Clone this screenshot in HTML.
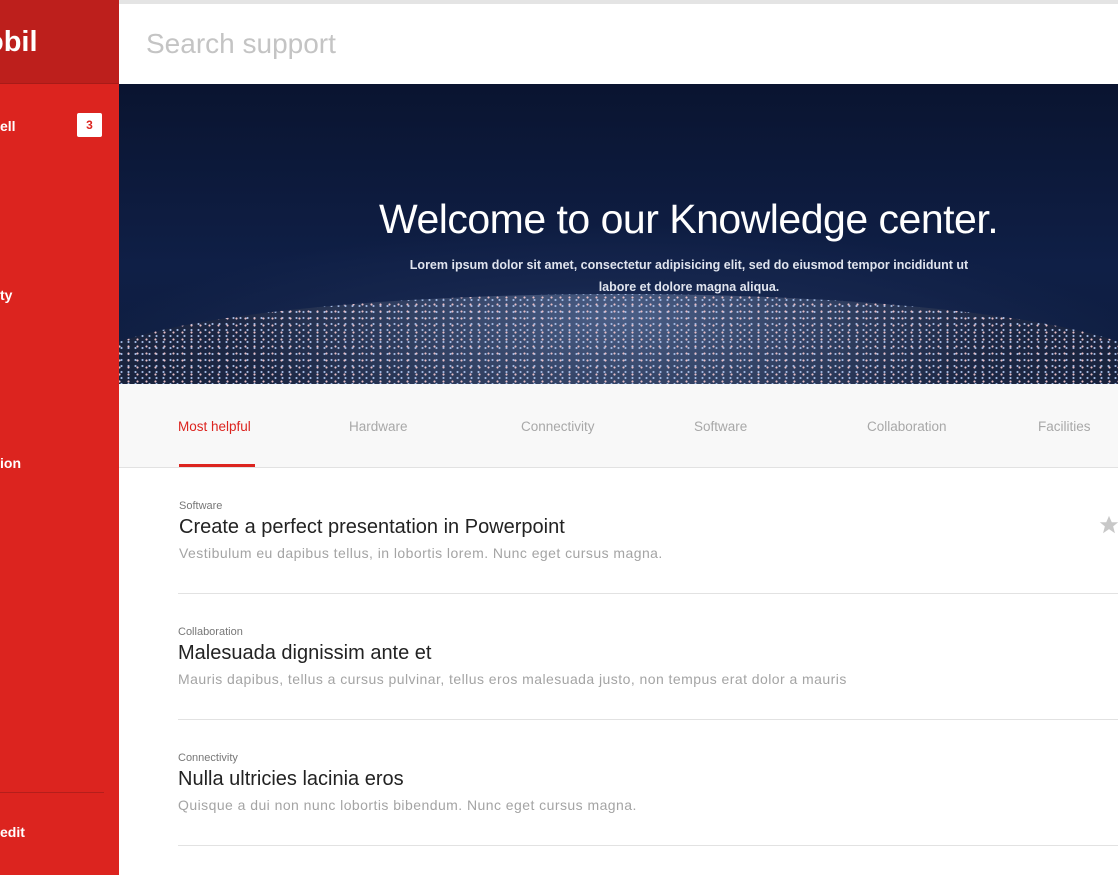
<!DOCTYPE html>
<html><head><meta charset="utf-8"><style>
*{margin:0;padding:0;box-sizing:border-box}
body{width:1118px;height:875px;overflow:hidden;font-family:"Liberation Sans",sans-serif;background:#fff;position:relative}
.side{position:absolute;left:0;top:0;width:119px;height:875px;background:#dc241f;color:#fff}
.side .top{height:84px;background:#bd1f1c;border-bottom:1px solid #a81b18}
.side .logo{position:absolute;left:-14px;top:26px;font-size:29px;font-weight:bold}
.si{position:absolute;left:0;font-size:14px;font-weight:bold}
.badge{position:absolute;left:77px;top:113px;width:25px;height:24px;background:#fff;border-radius:2px;color:#dc241f;font-size:12px;font-weight:bold;text-align:center;line-height:24px}
.hr{position:absolute;left:0;top:792px;width:104px;height:1px;background:#b51e1b}
.topbar{position:absolute;left:119px;top:0;right:0;height:4px;background:#e4e4e4}
.search{position:absolute;left:146px;top:28px;font-size:28px;color:#c4c4c4;font-weight:300}
.hero{position:absolute;left:119px;top:84px;width:999px;height:300px;background:radial-gradient(ellipse 700px 200px at 500px 300px,#2a4272 0%,#16264d 50%,transparent 80%),linear-gradient(#0a1430,#0f1f46 60%,#0e1d3e);overflow:hidden}
.city{position:absolute;left:-40px;top:210px;width:1080px;height:220px;border-radius:50% 50% 0 0/35% 35% 0 0;background:
radial-gradient(circle,#e8c0c8 0.8px,transparent 1.3px) 0 0/9px 7px,
radial-gradient(circle,#9fb6e0 0.8px,transparent 1.3px) 4px 3px/7px 6px,
radial-gradient(ellipse at 50% 10%,#4a5e86,#1d2845 50%,#121a30);}
.hero h1{position:absolute;left:260px;top:112px;font-size:41px;color:#fff;font-weight:300;letter-spacing:-.5px}
.hero p{position:absolute;left:275px;top:170px;width:590px;text-align:center;font-size:12.5px;color:#e0e4ee;font-weight:bold;line-height:22px}
.tabs{position:absolute;left:119px;top:384px;right:0;height:84px;background:#f8f8f8;border-bottom:1px solid #e2e2e2}
.tab{position:absolute;top:35px;font-size:13.5px;color:#a8a8a8}
.tab.on{color:#dc241f}
.ul{position:absolute;left:179px;top:464px;width:76px;height:3px;background:#dc241f}
.item{position:absolute;left:178px;width:940px;height:126px;border-bottom:1px solid #e2e2e2}
.cat{position:absolute;font-size:11px;color:#777}
.tt{position:absolute;font-size:20px;color:#222}
.ds{position:absolute;font-size:14px;color:#a4a4a4;letter-spacing:.45px}
</style></head><body>
<div class="side"><div class="top"></div><div class="logo">obil</div>
<div class="si" style="top:118px">ell</div><div class="badge">3</div>
<div class="si" style="top:287px">ty</div>
<div class="si" style="top:455px">ion</div>
<div class="hr"></div>
<div class="si" style="top:824px">edit</div></div>
<div class="topbar"></div>
<div class="search">Search support</div>
<div class="hero"><div class="city"></div>
<h1>Welcome to our Knowledge center.</h1>
<p>Lorem ipsum dolor sit amet, consectetur adipisicing elit, sed do eiusmod tempor incididunt ut labore et dolore magna aliqua.</p></div>
<div class="tabs">
<div class="tab on" style="left:59px">Most helpful</div>
<div class="tab" style="left:230px">Hardware</div>
<div class="tab" style="left:402px">Connectivity</div>
<div class="tab" style="left:575px">Software</div>
<div class="tab" style="left:748px">Collaboration</div>
<div class="tab" style="left:919px">Facilities</div>
</div>
<div class="ul"></div>
<div class="item" style="top:468px"><div class="cat" style="left:1px;top:32px">Software</div><div class="tt" style="left:1px;top:48px">Create a perfect presentation in Powerpoint</div><div class="ds" style="left:1px;top:77px">Vestibulum eu dapibus tellus, in lobortis lorem. Nunc eget cursus magna.</div>
<svg style="position:absolute;left:920px;top:46px" width="22" height="22" viewBox="0 0 24 24"><path d="M12 2l3 7h7l-5.5 4.5 2 7.5L12 16.5 5.5 21l2-7.5L2 9h7z" fill="#c8c8c8"/></svg></div>
<div class="item" style="top:594px"><div class="cat" style="top:32px">Collaboration</div><div class="tt" style="top:48px">Malesuada dignissim ante et</div><div class="ds" style="top:77px">Mauris dapibus, tellus a cursus pulvinar, tellus eros malesuada justo, non tempus erat dolor a mauris</div></div>
<div class="item" style="top:720px"><div class="cat" style="top:32px">Connectivity</div><div class="tt" style="top:48px">Nulla ultricies lacinia eros</div><div class="ds" style="top:77px">Quisque a dui non nunc lobortis bibendum. Nunc eget cursus magna.</div></div>
</body></html>
